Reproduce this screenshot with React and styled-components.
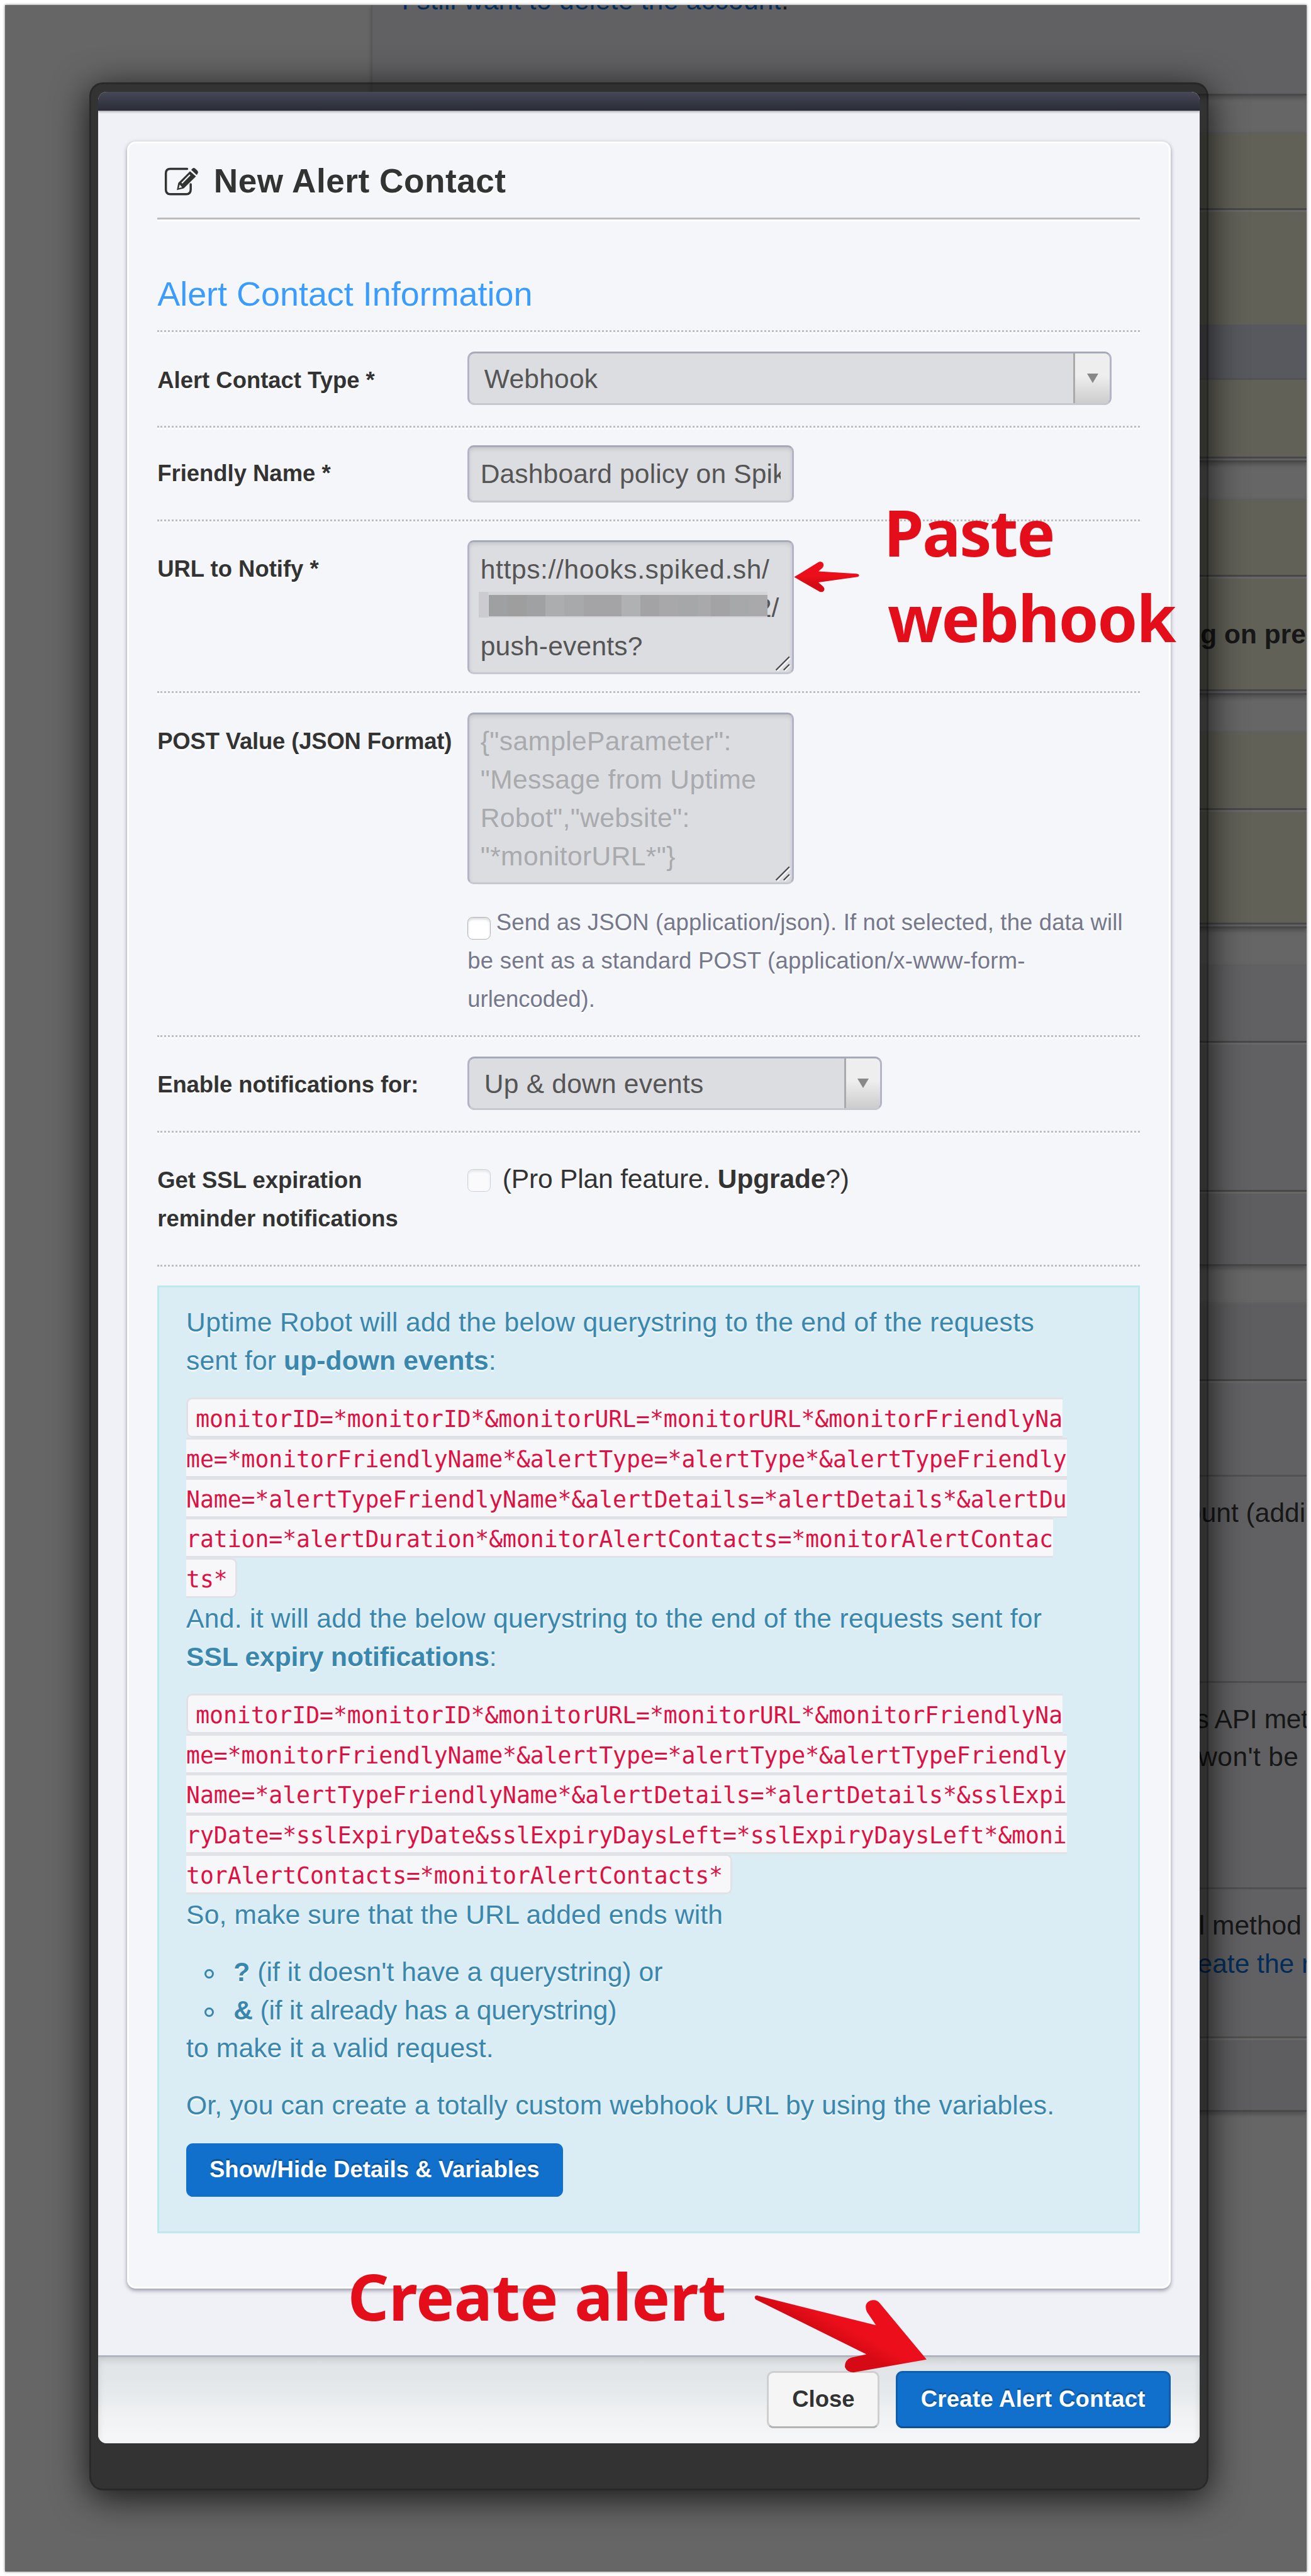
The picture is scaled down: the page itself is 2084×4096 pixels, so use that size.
import React from "react";
import styled, { createGlobalStyle, css } from "styled-components";

/* Design units are converted to screen pixels through one scale factor. */
const SCALE = 0.7594;
const u = (n) => `${+(n * SCALE).toFixed(3)}px`;

const SANS = '"Liberation Sans", Arial, Helvetica, sans-serif';
const MONO = '"DejaVu Sans Mono", Menlo, monospace';
const MARKER = '"Noto Sans", "Open Sans", sans-serif';

const GlobalStyle = createGlobalStyle`
  *, *::before, *::after { box-sizing: border-box; }
  html, body { margin: 0; background: #fff; }
  body { font-family: ${SANS}; font-size: ${u(56)}; line-height: ${u(80)}; color: #333; overflow: hidden; }
`;

const Canvas = styled.div`
  position: relative;
  width: 2084px;
  height: 4096px;
  padding: ${u(10)};
  overflow: hidden;
`;

const Viewport = styled.div`
  position: relative;
  width: ${u(2724.5)};
  height: ${u(5374)};
  background: #666;
  overflow: hidden;
  display: flex;
`;

const ViewportShadow = styled.div`
  box-shadow: 0 0 ${u(5)} rgba(0, 0, 0, 0.55);
  width: ${u(2724.5)};
`;

/* Letter spacing for one run of text. */
const Tracked = styled.span`
  letter-spacing: ${(p) => u(p.$t)};
`;

/* ---------- dimmed page behind the dialog ---------- */

const PageGutter = styled.div`
  flex: 0 0 ${u(767)};
`;

const PageColumn = styled.div`
  flex: 1;
  min-width: 0;
  display: flex;
  flex-direction: column;
`;

const Panel = styled.section`
  flex: none;
  display: flex;
  flex-direction: column;
  border-left: ${u(3)} solid #585858;
  border-bottom: ${u(4)} solid #494949;
  border-bottom-left-radius: ${u(16)};
  box-shadow: 0 ${u(5)} ${u(8)} rgba(0, 0, 0, 0.22);
  margin-bottom: ${u(76)};
  ${(p) => p.$framed && css`border-top: ${u(4)} solid #606060;`}
`;

const TONES = { plain: "#616163", deep: "#5e5e60", olive: "#616158", slate: "#58595e" };

const Band = styled.div`
  height: ${(p) => u(p.$h)};
  background: ${(p) => TONES[p.$tone]};
  border-bottom: ${(p) => (p.$line ? `${u(4)} solid ${p.$line}` : "none")};
  box-shadow: ${(p) => (p.$lit ? `inset 0 ${u(4)} 0 #686867` : "none")};
  padding: ${(p) => `${u(p.$top || 0)} 0 0 ${u(p.$left || 0)}`};
  white-space: nowrap;
  overflow: hidden;
  color: #171717;
  font-weight: ${(p) => (p.$bold ? 700 : 400)};
`;

const PageLine = styled.div`
  margin-left: ${(p) => u(p.$dx || 0)};
  margin-top: ${(p) => u(p.$dy || 0)};
`;

const PageLink = styled.span`
  color: #032d58;
`;

/* ---------- dialog ---------- */

const Dialog = styled.div`
  position: absolute;
  left: ${u(177)};
  top: ${u(162)};
  width: ${u(2343)};
  height: ${u(5043)};
  border: ${u(4)} solid rgba(0, 0, 0, 0.2);
  border-radius: ${u(28)};
  background: rgba(0, 0, 0, 0.5);
  box-shadow: 0 ${u(14)} ${u(76)} rgba(0, 0, 0, 0.8);
  padding: ${u(16)} ${u(15.5)} 0 ${u(14.6)};
`;

const DialogContent = styled.div`
  display: flex;
  flex-direction: column;
  border-radius: ${u(18)};
  overflow: hidden;
  background: #f0f1f7;
`;

const DialogBar = styled.div`
  height: ${u(40)};
  background: linear-gradient(#454855, #2b2c38);
  box-shadow: 0 ${u(2)} ${u(4)} rgba(0, 0, 0, 0.3);
`;

const DialogBody = styled.div`
  height: ${u(4700)};
  padding: ${u(64)} ${u(60)} 0;
`;

const Card = styled.div`
  height: ${u(4496)};
  border: ${u(4)} solid #fff;
  border-radius: ${u(18)};
  background: #f4f6fa;
  box-shadow: 0 ${u(3)} ${u(8)} rgba(20, 22, 50, 0.42);
  padding: 0 ${u(60)};
`;

const CardTitle = styled.h3`
  margin: 0;
  height: ${u(160)};
  padding: ${u(5)} 0 0 ${u(14)};
  display: flex;
  align-items: center;
  border-bottom: ${u(4)} solid #bbb;
  box-shadow: 0 ${u(4)} 0 #fff;
  font-size: ${u(70)};
  font-weight: 700;
  letter-spacing: ${u(0.7)};
  text-shadow: 0 ${u(4)} 0 #fff;
  gap: ${u(32)};
  svg { width: ${u(72)}; height: ${u(62)}; flex: none; }
`;

const Legend = styled.h4`
  margin: 0;
  padding: ${u(116)} 0 ${u(36)};
  border-bottom: ${u(4)} dotted #bdbec1;
  font-size: ${u(71)};
  font-weight: 400;
  color: #3b9cff;
  text-shadow: 0 ${u(4)} 0 #fff;
`;

const Row = styled.div`
  display: flex;
  height: ${(p) => u(p.$h)};
  border-top: ${u(4)} dotted #fff;
  border-bottom: ${u(4)} dotted #bdbec1;
  padding-top: ${(p) => u(p.$tight ? 32 : 36)};
`;

const Label = styled.label`
  flex: 0 0 ${u(649.3)};
  padding-top: ${u(21)};
  font-size: ${u(48)};
  font-weight: 700;
  letter-spacing: ${(p) => u(p.$t || 0)};
  white-space: nowrap;
  text-shadow: 0 ${u(4)} 0 #fff;
`;

const Controls = styled.div`
  flex: 1;
  min-width: 0;
`;

const fieldSkin = css`
  border: ${u(4)} solid #b3b5c6;
  border-top-color: #a6a9b8;
  border-bottom-color: #c5c7d1;
  background: #dcdde0;
  color: #555;
`;

const SelectBox = styled.div`
  ${fieldSkin}
  display: flex;
  width: ${(p) => u(p.$w)};
  height: ${u(112)};
  border-radius: ${u(15)};
  overflow: hidden;
  line-height: ${u(107)};
  padding-left: ${u(31)};
`;

const SelectValue = styled.span`
  flex: 1;
  letter-spacing: ${u(0.3)};
`;

const SelectArrow = styled.span`
  flex: 0 0 ${u(76)};
  height: ${u(104)};
  border-left: ${u(4)} solid #aaa;
  background: linear-gradient(#eee 45%, #ccc);
  display: flex;
  align-items: center;
  justify-content: center;
  &::before {
    content: "";
    border: ${u(12)} solid transparent;
    border-top: ${u(20)} solid #888;
    border-bottom: 0;
  }
`;

const Field = styled.div`
  ${fieldSkin}
  position: relative;
  width: ${u(683)};
  height: ${(p) => u(p.$h)};
  border-radius: ${u(13)};
  box-shadow: inset 0 ${u(4)} ${u(8)} rgba(0, 0, 0, 0.11);
  padding: ${u(18)} ${u(24)} 0 ${u(23)};
  color: ${(p) => (p.$placeholder ? "#a9aaad" : "#555")};
  white-space: nowrap;
`;

const Clip = styled.div`
  overflow: hidden;
  letter-spacing: ${u(0.2)};
`;

const Redacted = styled.div`
  display: flex;
  justify-content: flex-end;
  height: ${u(80)};
  padding-right: ${u(3)};
  position: relative;
`;

const Mosaic = styled.div`
  position: absolute;
  left: ${u(-3)};
  top: ${u(6)};
  width: ${u(604)};
  height: ${u(53)};
  padding: ${u(6)} 0 ${u(2)} ${u(20)};
  background: linear-gradient(90deg, #cccbd0 0 ${u(20)}, #d5d5d9 ${u(20)});
  display: flex;
`;

const Tile = styled.span`
  flex: ${(p) => p.$w || 1};
  background: ${(p) => p.$c};
`;

const Grip = styled.svg`
  position: absolute;
  right: ${u(2)};
  bottom: ${u(2)};
  width: ${u(34)};
  height: ${u(34)};
`;

const Help = styled.p`
  margin: ${u(41)} 0 0;
  font-size: ${u(48)};
  color: #75778b;
  text-shadow: 0 ${u(4)} 0 #fff;
  white-space: nowrap;
`;

const Checkbox = styled.span`
  display: inline-block;
  width: ${u(48)};
  height: ${u(48)};
  border: ${u(2.6)} solid #b4b4b6;
  border-radius: ${u(11)};
  background: #fff;
  box-shadow: inset 0 ${u(4)} ${u(5)} rgba(0, 0, 0, 0.15);
  vertical-align: ${(p) => u(p.$drop)};
  margin-right: ${(p) => u(p.$gap)};
  opacity: ${(p) => (p.$disabled ? 0.55 : 1)};
`;

const Upsell = styled.div`
  padding-top: ${u(18)};
  letter-spacing: ${u(-0.2)};
  text-shadow: 0 ${u(4)} 0 #fff;
  white-space: nowrap;
`;

const Info = styled.div`
  margin-top: ${u(40)};
  height: ${u(1984)};
  border: ${u(4)} solid #bce8ee;
  background: #daecf4;
  color: #3a87ad;
  padding: ${u(34)} ${u(56)} 0 ${u(56.5)};
  text-shadow: 0 ${u(4)} 0 rgba(255, 255, 255, 0.55);
  white-space: nowrap;
`;

const Para = styled.p`
  margin: 0 0 ${u(40)};
  letter-spacing: ${(p) => u(p.$t || 0)};
`;

const CodeBlock = styled.div`
  line-height: ${u(84)};
  font-size: ${u(48)};
`;

const Code = styled.code`
  font: ${u(48)} / ${u(84)} ${MONO};
  letter-spacing: ${u(-0.09)};
  color: #dd1144;
  background: #f7f7f9;
  border: ${u(4)} solid #e1e1e8;
  border-radius: ${u(12)};
  padding: ${u(13)} ${u(16)} ${u(7)} ${u(16)};
`;

const List = styled.ul`
  list-style: none;
  margin: 0;
  padding: 0 0 0 ${u(38)};
`;

const Item = styled.li`
  display: flex;
  align-items: center;
  gap: ${u(41)};
  letter-spacing: ${(p) => u(p.$t)};
  &::before {
    content: "";
    width: ${u(20)};
    height: ${u(20)};
    margin-top: ${u(6)};
    border: ${u(4)} solid #3a87ad;
    border-radius: 50%;
  }
`;

const Button = styled.button`
  font: 700 ${u(48)} / 1 ${SANS};
  letter-spacing: ${(p) => u(p.$t ?? 0.2)};
  height: ${(p) => u(p.$h || 120)};
  width: ${(p) => u(p.$w)};
  margin-top: ${(p) => u(p.$flat ? -2 : 0)};
  padding: 0;
  border-radius: ${u(14)};
  white-space: nowrap;
  ${(p) =>
    p.$primary
      ? css`
          color: #fff;
          background: #1170cc;
          border: ${u(p.$flat ? 0 : 4)} solid #0e60ae;
          border-bottom-color: #0c509a;
          text-shadow: 0 ${u(-4)} 0 rgba(0, 0, 0, 0.25);
        `
      : css`
          color: #333;
          background: #f5f5f5;
          border: ${u(4)} solid #cfcfcf;
          border-bottom-color: #b3b3b3;
          text-shadow: 0 ${u(4)} ${u(4)} rgba(255, 255, 255, 0.75);
        `}
`;

const DialogFooter = styled.div`
  height: ${u(184)};
  border-top: ${u(4)} solid #b1b4bf;
  background: linear-gradient(#dfe3e6, #e5e9eb 40%, #f1f2f4 70%, #f6f7f9);
  box-shadow: inset 0 ${u(5)} ${u(14)} rgba(0, 0, 0, 0.13);
  display: flex;
  justify-content: flex-end;
  gap: ${u(33)};
  padding: ${u(28)} ${u(60)} 0;
`;

/* ---------- marker annotations over the page ---------- */

const Note = styled.div`
  position: absolute;
  left: ${(p) => u(p.$x)};
  top: ${(p) => u(p.$y)};
  font: 700 ${u(134.5)} / ${u(180)} ${MARKER};
  letter-spacing: ${(p) => u(p.$t)};
  color: #e30e19;
  white-space: nowrap;
`;

const ArrowSvg = styled.svg`
  position: absolute;
  left: ${(p) => u(p.$x)};
  top: ${(p) => u(p.$y)};
  width: ${(p) => u(p.$w)};
  height: ${(p) => u(p.$h)};
`;

const EditIcon = () => (
  <svg viewBox="0 0 72 62" fill="none">
    <path d="M48 4.5H13Q3.500 4.500 3.500 14V48Q3.500 57.500 13 57.500H46Q55.500 57.500 55.500 48V37" stroke="#333" strokeWidth="4.600" strokeLinecap="round" />
    <path fillRule="evenodd" fill="#333" d="M54 9.500 66.500 20.500 41 45.500 26.500 49 29.500 34ZM32.500 37.500 30.500 45 37.500 43ZM53 16 36 33.500 38 35.500 55 18Z" />
    <path fill="#333" d="M56.500 6.500 59.500 3.500Q62 1.500 65 4L70 9Q72 12 70 14.500L68 17.500Z" />
  </svg>
);

const ResizeGrip = () => (
  <Grip viewBox="0 0 34 34" fill="none" strokeWidth="2.800">
    <path d="M5 33 32 6M20 33 32 21" stroke="#f6f6f8" />
    <path d="M2 31 30 3M18 31 30 19" stroke="#484848" />
  </Grip>
);

const Select = ({ width, children }) => (
  <SelectBox $w={width}>
    <SelectValue>{children}</SelectValue>
    <SelectArrow />
  </SelectBox>
);

const TILES = [
  ["#9fa0a1", 1], ["#9e9e9f", 1], ["#a0a1a2", 1], ["#acadaf", 1], ["#a8a9ab", 1],
  ["#a4a4a6", 2], ["#b0b1b3", 1], ["#a3a3a5", 1], ["#a8a8aa", 1], ["#a5a7a8", 1],
  ["#a9a9ab", 0.7], ["#a3a3a5", 1], ["#a7a8aa", 1], ["#a9a9ac", 1],
];

const Lines = ({ rows }) =>
  rows.map((row, i) => (
    <React.Fragment key={row}>
      {i > 0 && <br />}
      {row}
    </React.Fragment>
  ));

const UP_DOWN_QUERY = [
  "monitorID=*monitorID*&monitorURL=*monitorURL*&monitorFriendlyNa",
  "me=*monitorFriendlyName*&alertType=*alertType*&alertTypeFriendly",
  "Name=*alertTypeFriendlyName*&alertDetails=*alertDetails*&alertDu",
  "ration=*alertDuration*&monitorAlertContacts=*monitorAlertContac",
  "ts*",
];

const SSL_QUERY = [
  "monitorID=*monitorID*&monitorURL=*monitorURL*&monitorFriendlyNa",
  "me=*monitorFriendlyName*&alertType=*alertType*&alertTypeFriendly",
  "Name=*alertTypeFriendlyName*&alertDetails=*alertDetails*&sslExpi",
  "ryDate=*sslExpiryDate&sslExpiryDaysLeft=*sslExpiryDaysLeft*&moni",
  "torAlertContacts=*monitorAlertContacts*",
];

function BackgroundPage() {
  return (
    <>
      <PageGutter />
      <PageColumn>
        <Panel>
          <Band $h={186} $tone="plain" $left={61}>
            <PageLine $dy={-48}>
              <Tracked $t={0.4}>
                <PageLink>I still want to delete the account</PageLink>.
              </Tracked>
            </PageLine>
          </Band>
        </Panel>
        <Panel $framed>
          <Band $h={160} $tone="olive" $line="#484848" />
          <Band $h={240} $tone="olive" $lit />
          <Band $h={116} $tone="slate" $line="#525355" />
          <Band $h={164} $tone="olive" $line="#484849" />
          <Band $h={4} $tone="plain" />
        </Panel>
        <Panel $framed>
          <Band $h={160} $tone="olive" $line="#484848" />
          <Band $h={240} $tone="olive" $line="#484849" $lit $bold $top={82} $left={1699}>ng on pre</Band>
          <Band $h={4} $tone="plain" />
        </Panel>
        <Panel $framed>
          <Band $h={160} $tone="olive" $line="#484848" />
          <Band $h={240} $tone="olive" $line="#484849" $lit />
          <Band $h={4} $tone="plain" />
        </Panel>
        <Panel $framed>
          <Band $h={160} $tone="plain" $line="#484848" />
          <Band $h={312} $tone="plain" $line="#484848" $lit />
          <Band $h={152} $tone="deep" $lit />
        </Panel>
        <Panel $framed>
          <Band $h={160} $tone="deep" $line="#474747" />
          <Band $h={200} $tone="plain" $line="#515152" $lit />
          <Band $h={432} $tone="plain" $line="#505051" $top={37} $left={1704}>ount (addi</Band>
          <Band $h={432} $tone="plain" $line="#505051" $top={37} $left={1723}>
            <PageLine><Tracked $t={-0.4}>s API met</Tracked></PageLine>
            <PageLine $dx={5}><Tracked $t={0.5}>won't be</Tracked></PageLine>
          </Band>
          <Band $h={312} $tone="plain" $line="#505051" $top={38} $left={1730}>
            <PageLine>l method</PageLine>
            <PageLine $dx={-3}><PageLink>eate the r</PageLink></PageLine>
          </Band>
          <Band $h={151} $tone="deep" $lit />
        </Panel>
      </PageColumn>
    </>
  );
}

function AlertDialog() {
  return (
    <Dialog>
      <DialogContent>
        <DialogBar />
        <DialogBody>
          <Card>
            <CardTitle><EditIcon />New Alert Contact</CardTitle>
            <Legend>Alert Contact Information</Legend>
            <Row $h={200}>
              <Label>Alert Contact Type *</Label>
              <Controls><Select width={1348}>Webhook</Select></Controls>
            </Row>
            <Row $h={196} $tight>
              <Label>Friendly Name *</Label>
              <Controls>
                <Field $h={120}><Clip>Dashboard policy on Spike</Clip></Field>
              </Controls>
            </Row>
            <Row $h={360}>
              <Label>URL to Notify *</Label>
              <Controls>
                <Field $h={280}>
                  <Tracked $t={0.85}>https://hooks.spiked.sh/</Tracked>
                  <Redacted>
                    2/
                    <Mosaic>
                      {TILES.map(([c, w], i) => <Tile key={i} $c={c} $w={w} />)}
                    </Mosaic>
                  </Redacted>
                  <Tracked $t={0.3}>push-events?</Tracked>
                  <ResizeGrip />
                </Field>
              </Controls>
            </Row>
            <Row $h={720}>
              <Label $t={-0.2}>POST Value (JSON Format)</Label>
              <Controls>
                <Field $h={360} $placeholder>
                  <Tracked $t={0.5}>
                    <Lines rows={['{"sampleParameter":', '"Message from Uptime', 'Robot","website":', '"*monitorURL*"}']} />
                  </Tracked>
                  <ResizeGrip />
                </Field>
                <Help>
                  <Checkbox $drop={-20} $gap={12} />
                  <Tracked $t={0.2}>Send as JSON (application/json). If not selected, the data will</Tracked><br />
                  <Tracked $t={0.37}>be sent as a standard POST (application/x-www-form-</Tracked><br />
                  urlencoded).
                </Help>
              </Controls>
            </Row>
            <Row $h={200}>
              <Label $t={-0.1}>Enable notifications for:</Label>
              <Controls><Select width={868}>Up &amp; down events</Select></Controls>
            </Row>
            <Row $h={280}>
              <Label>Get SSL expiration<br />reminder notifications</Label>
              <Controls>
                <Upsell>
                  <Checkbox $drop={-8} $gap={25} $disabled />
                  (Pro Plan feature. <b>Upgrade</b>?)
                </Upsell>
              </Controls>
            </Row>
            <Info>
              <Para $t={0.46}>
                Uptime Robot will add the below querystring to the end of the requests<br />
                <Tracked $t={0.2}>sent for <b>up-down events</b>:</Tracked>
              </Para>
              <CodeBlock><Code><Lines rows={UP_DOWN_QUERY} /></Code></CodeBlock>
              <Para $t={0.4}>
                And. it will add the below querystring to the end of the requests sent for<br />
                <Tracked $t={-0.1}><b>SSL expiry notifications</b>:</Tracked>
              </Para>
              <CodeBlock><Code><Lines rows={SSL_QUERY} /></Code></CodeBlock>
              <Para $t={0.27}>So, make sure that the URL added ends with</Para>
              <List>
                <Item $t={0.1}><span><b>?</b> (if it doesn't have a querystring) or</span></Item>
                <Item $t={-0.2}><span><b>&amp;</b> (if it already has a querystring)</span></Item>
              </List>
              <Para $t={0.2}>to make it a valid request.</Para>
              <Para $t={0.25}>Or, you can create a totally custom webhook URL by using the variables.</Para>
              <Button $primary $flat $t={0.1} $h={112} $w={788}>Show/Hide Details &amp; Variables</Button>
            </Info>
          </Card>
        </DialogBody>
        <DialogFooter>
          <Button $w={236} $t={0}>Close</Button>
          <Button $primary $t={0.4} $w={576}>Create Alert Contact</Button>
        </DialogFooter>
      </DialogContent>
    </Dialog>
  );
}

function Annotations() {
  return (
    <>
      <Note $x={1850} $y={1024} $t={-2.8}>Paste</Note>
      <Note $x={1858} $y={1203} $t={-2.5}>webhook</Note>
      <ArrowSvg $x={1655} $y={1170} $w={150} $h={76} viewBox="1655 1170 150 76">
        <defs>
          <linearGradient id="shortArrow" x1="0" y1="0" x2="0" y2="1">
            <stop offset=".45" stopColor="#ec0f1b" />
            <stop offset=".75" stopColor="#d50a14" />
          </linearGradient>
        </defs>
        <path fill="url(#shortArrow)" d="M1662 1209 1711 1179Q1717 1174 1722 1179 1726 1184 1721 1190L1713 1197 1793 1202Q1798 1203 1798 1205.500 1798 1208 1793 1209L1713 1220 1723 1229Q1728 1235 1723 1239 1718 1242 1713 1238Z" />
      </ArrowSvg>
      <Note $x={728} $y={4718} $t={-0.5}>Create alert</Note>
      <ArrowSvg $x={1570} $y={4795} $w={380} $h={180} viewBox="1570 4795 380 180">
        <defs>
          <linearGradient id="longArrow" gradientUnits="userSpaceOnUse" x1="1770" y1="4840" x2="1735" y2="4905">
            <stop offset=".35" stopColor="#ec0f1b" />
            <stop offset=".85" stopColor="#d50a14" />
          </linearGradient>
        </defs>
        <path fill="url(#longArrow)" d="M1585 4807 1834 4869 1815 4841Q1808 4824 1821 4818 1834 4813 1842 4823L1940 4941 1787 4968Q1774 4968 1769 4957 1768 4942 1782 4937L1814 4930 1582 4815Q1577 4808 1585 4807Z" />
      </ArrowSvg>
    </>
  );
}

export default function App() {
  return (
    <>
      <GlobalStyle />
      <Canvas>
        <ViewportShadow>
          <Viewport>
            <BackgroundPage />
            <AlertDialog />
          </Viewport>
        </ViewportShadow>
        <Annotations />
      </Canvas>
    </>
  );
}
